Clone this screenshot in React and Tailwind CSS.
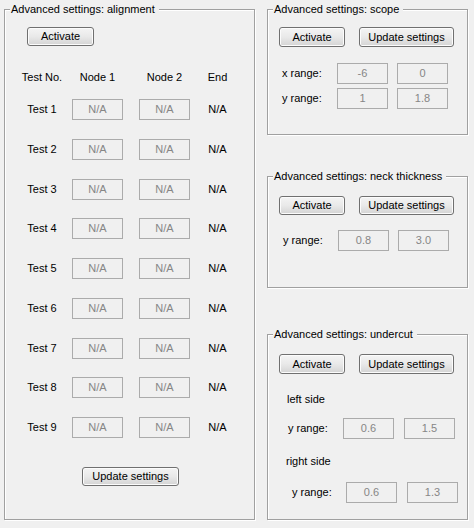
import React from "react";

const font = { fontFamily: '"Liberation Sans", Arial, sans-serif' };

const Panel = ({ title, className, children }) => (
    <div
        className={`relative border border-[#a0a0a0] shadow-[1px_1px_0_#ffffff,inset_1px_1px_0_#ffffff] ${className}`}
    >
        <span className="absolute left-[5px] top-[-7px] bg-[#f0f0f0] pl-[1px] pr-[4px] leading-[13px] text-black">
            {title}
        </span>
        {children}
    </div>
);

const Button = ({ children, className }) => (
    <button
        className={`flex items-center justify-center rounded-[3px] border border-[#707070] bg-gradient-to-b from-[#f4f4f4] via-[#e9e9e9] to-[#d4d4d4] leading-[13px] text-black shadow-[inset_0_0_0_1px_#fcfcfc] ${className}`}
    >
        {children}
    </button>
);

const Box = ({ value, className }) => (
    <div
        className={`flex h-[21px] w-[51px] items-center justify-center border border-[#ababab] leading-[13px] text-[#868686] ${className}`}
    >
        {value}
    </div>
);

const RangeRow = ({ label, low, high, className, labelW = "w-[55px]", gap = "ml-[9px]" }) => (
    <div className={`flex items-center ${className}`}>
        <span className={labelW}>{label}</span>
        <Box value={low} />
        <Box value={high} className={gap} />
    </div>
);

const tests = [1, 2, 3, 4, 5, 6, 7, 8, 9];

export default function App() {
    return (
        <div
            className="flex h-[528px] w-[474px] items-start bg-[#f0f0f0] text-[11px] leading-[13px] text-black"
            style={font}
        >
            {/* alignment panel */}
            <Panel title="Advanced settings: alignment" className="ml-[4px] mt-[9px] h-[511px] w-[251px]">
                <Button className="ml-[22px] mt-[17px] h-[19px] w-[67px]">Activate</Button>

                <div className="ml-[7px] mt-[25px] flex">
                    <span className="w-[60px] text-center">Test No.</span>
                    <span className="w-[51px] text-center">Node 1</span>
                    <span className="ml-[16px] w-[51px] text-center">Node 2</span>
                    <span className="w-[55px] text-center">End</span>
                </div>

                <div className="ml-[7px] mt-[15px] flex flex-col gap-[18.75px]">
                    {tests.map((n) => (
                        <div key={n} className="flex h-[21px] items-center">
                            <span className="w-[60px] text-center">Test {n}</span>
                            <Box value="N/A" />
                            <Box value="N/A" className="ml-[16px]" />
                            <span className="w-[55px] text-center">N/A</span>
                        </div>
                    ))}
                </div>

                <Button className="ml-[77px] mt-[29px] h-[19px] w-[97px]">Update settings</Button>
            </Panel>

            <div className="ml-[12px] flex flex-col">
                {/* scope */}
                <Panel title="Advanced settings: scope" className="mt-[9px] h-[126px] w-[201px]">
                    <div className="ml-[11px] mt-[17px] flex gap-[14px]">
                        <Button className="h-[20px] w-[66px]">Activate</Button>
                        <Button className="h-[20px] w-[95px]">Update settings</Button>
                    </div>
                    <RangeRow label="x range:" low="-6" high="0" className="ml-[14px] mt-[16px]" />
                    <RangeRow label="y range:" low="1" high="1.8" className="ml-[14px] mt-[4px]" />
                </Panel>

                {/* neck thickness */}
                <Panel title="Advanced settings: neck thickness" className="mt-[41px] h-[112px] w-[201px]">
                    <div className="ml-[11px] mt-[19px] flex gap-[14px]">
                        <Button className="h-[19px] w-[66px]">Activate</Button>
                        <Button className="h-[19px] w-[95px]">Update settings</Button>
                    </div>
                    <RangeRow label="y range:" low="0.8" high="3.0" className="ml-[15px] mt-[15px]" />
                </Panel>

                {/* undercut */}
                <Panel title="Advanced settings: undercut" className="mt-[46px] h-[186px] w-[201px]">
                    <div className="ml-[11px] mt-[19px] flex gap-[14px]">
                        <Button className="h-[20px] w-[66px]">Activate</Button>
                        <Button className="h-[20px] w-[95px]">Update settings</Button>
                    </div>
                    <div className="ml-[19px] mt-[19px]">left side</div>
                    <RangeRow
                        label="y range:"
                        low="0.6"
                        high="1.5"
                        className="ml-[20px] mt-[12px]"
                        gap="ml-[10px]"
                    />
                    <div className="ml-[18px] mt-[16px]">right side</div>
                    <RangeRow
                        label="y range:"
                        low="0.6"
                        high="1.3"
                        className="ml-[24px] mt-[14px]"
                        labelW="w-[54px]"
                        gap="ml-[10px]"
                    />
                </Panel>
            </div>
        </div>
    );
}
